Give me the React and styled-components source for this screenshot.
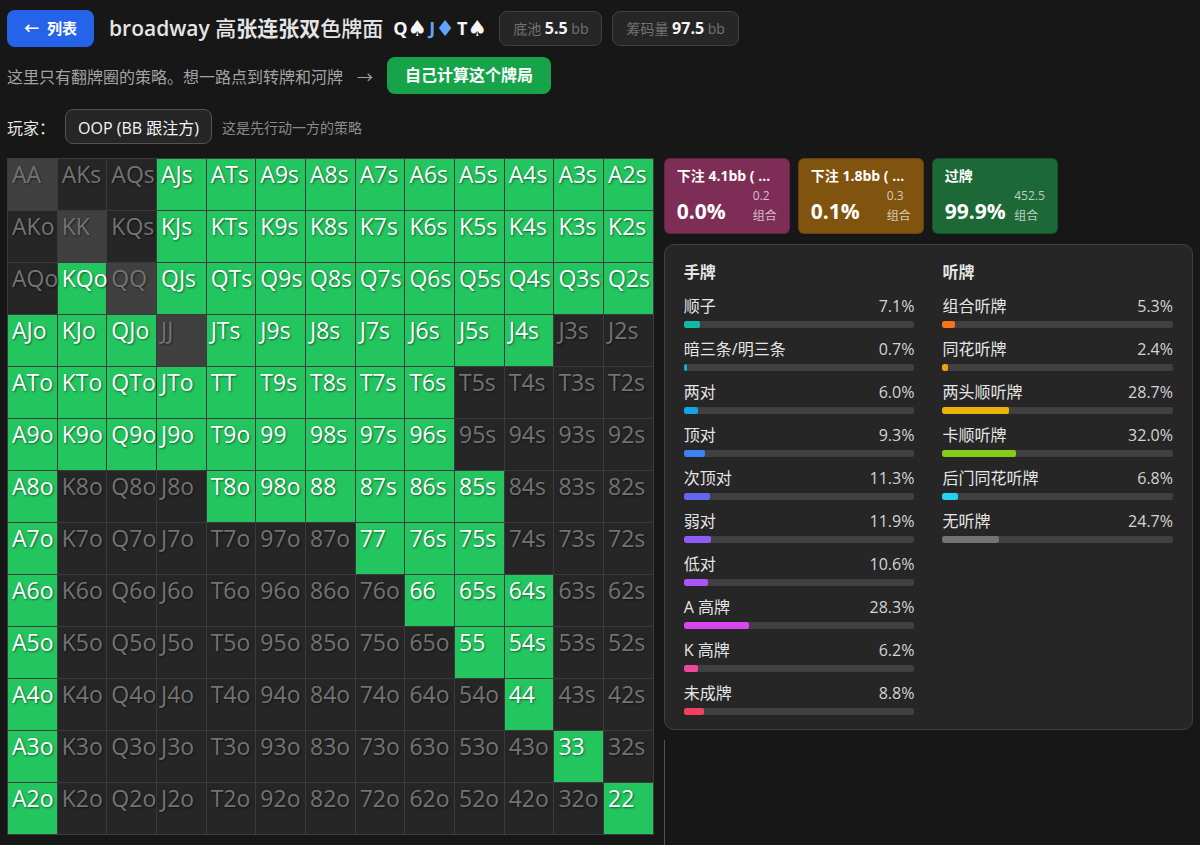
import React from 'react'
import styled, { createGlobalStyle } from 'styled-components'

const RANKS = 'AKQJT98765432'.split('');

// first and last column played in each row of the matrix
const PLAYED = [
  [[3, 12]],
  [[3, 12]],
  [[1, 1], [3, 12]],
  [[0, 2], [4, 10]],
  [[0, 8]],
  [[0, 8]],
  [[0, 0], [4, 9]],
  [[0, 0], [7, 9]],
  [[0, 0], [8, 10]],
  [[0, 0], [9, 10]],
  [[0, 0], [10, 10]],
  [[0, 0], [11, 11]],
  [[0, 0], [12, 12]],
];

const board = [
  { rank: 'Q', suit: '♠' },
  { rank: 'J', suit: '♦' },
  { rank: 'T', suit: '♠' },
];

const actions = [
  { name: '下注 4.1bb ( ...', percent: '0.0%', combos: '0.2', color: '#7d2d56' },
  { name: '下注 1.8bb ( ...', percent: '0.1%', combos: '0.3', color: '#80530f' },
  { name: '过牌', percent: '99.9%', combos: '452.5', color: '#1c6837' },
];

const madeHands = [
  { name: '顺子', value: 7.1, color: '#14b8a6' },
  { name: '暗三条/明三条', value: 0.7, color: '#06b6d4' },
  { name: '两对', value: 6.0, color: '#0ea5e9' },
  { name: '顶对', value: 9.3, color: '#3b82f6' },
  { name: '次顶对', value: 11.3, color: '#6366f1' },
  { name: '弱对', value: 11.9, color: '#8b5cf6' },
  { name: '低对', value: 10.6, color: '#a855f7' },
  { name: 'A 高牌', value: 28.3, color: '#d946ef' },
  { name: 'K 高牌', value: 6.2, color: '#ec4899' },
  { name: '未成牌', value: 8.8, color: '#f43f5e' },
];

const draws = [
  { name: '组合听牌', value: 5.3, color: '#f97316' },
  { name: '同花听牌', value: 2.4, color: '#f59e0b' },
  { name: '两头顺听牌', value: 28.7, color: '#eab308' },
  { name: '卡顺听牌', value: 32.0, color: '#84cc16' },
  { name: '后门同花听牌', value: 6.8, color: '#22d3ee' },
  { name: '无听牌', value: 24.7, color: '#737373' },
];

const handName = (row, col) => {
  if (row === col) return RANKS[row] + RANKS[col];
  return row < col ? `${RANKS[row]}${RANKS[col]}s` : `${RANKS[col]}${RANKS[row]}o`;
};

const isPlayed = (row, col) => PLAYED[row].some(([from, to]) => col >= from && col <= to);

const HandMatrix = () => (
  <Matrix>
    <tbody>
      {RANKS.map((rank, row) => (
        <tr key={rank}>
          {RANKS.map((other, col) => (
            <Cell key={other} $played={isPlayed(row, col)} $pair={row === col}>
              {handName(row, col)}
            </Cell>
          ))}
        </tr>
      ))}
    </tbody>
  </Matrix>
);

const StatColumn = ({ title, items }) => (
  <section>
    <StatTitle>{title}</StatTitle>
    <StatList>
      {items.map(({ name, value, color }) => (
        <li key={name}>
          <StatRow>
            <span>{name}</span>
            <StatValue>{value.toFixed(1)}%</StatValue>
          </StatRow>
          <Track>
            <Fill $color={color} style={{ width: `${value}%` }} />
          </Track>
        </li>
      ))}
    </StatList>
  </section>
);

const App = () => {
  return (
    <Page>
      <GlobalStyle />

      <Header>
        <BackLink href="#list"><span>←</span><span>列表</span></BackLink>
        <Title>broadway <Light>高</Light>张连张双<Light>色牌面</Light></Title>
        <Board>
          {board.map(({ rank, suit }) => (
            <Card key={rank} $blue={suit === '♦'}>{rank}<Suit>{suit}</Suit></Card>
          ))}
        </Board>
        <Chips>
          <Chip>底池 <b>5.5</b> bb</Chip>
          <Chip>筹码量 <b>97.5</b> bb</Chip>
        </Chips>
      </Header>

      <Notice>
        <NoticeText><span>这里只有翻牌圈的策略。想一路点到转牌和河牌</span><span>→</span></NoticeText>
        <SolveLink href="#solve">自己计算这个牌局</SolveLink>
      </Notice>

      <PlayerRow>
        <span id="player">玩家：</span>
        <PlayerButton type="button" aria-describedby="player">OOP (BB 跟注方)</PlayerButton>
        <Hint>这是先行动一方的策略</Hint>
      </PlayerRow>

      <Content>
        <HandMatrix />
        <Side>
          <Actions>
            {actions.map(({ name, percent, combos, color }) => (
              <ActionCard key={name} type="button" $color={color}>
                <ActionName>{name}</ActionName>
                <ActionBody>
                  <Percent>{percent}</Percent>
                  <Combos><span>{combos}</span><span>组合</span></Combos>
                </ActionBody>
              </ActionCard>
            ))}
          </Actions>
          <Stats>
            <StatColumn title="手牌" items={madeHands} />
            <StatColumn title="听牌" items={draws} />
          </Stats>
          <Details />
        </Side>
      </Content>
    </Page>
  )
}

const GlobalStyle = createGlobalStyle`
  *{
    box-sizing: border-box;
    margin: 0;
    padding: 0;
  }

  body{
    background: #171717;
    color: #e5e5e5;
    font-family: "Open Sans", "Noto Sans CJK SC", sans-serif;
    font-size: 16px;
  }

  button{
    font: inherit;
    color: inherit;
    cursor: pointer;
  }

  a{
    text-decoration: none;
  }
`;

const Page = styled.main`
  min-height: 100vh;
  display: flex;
  flex-direction: column;
  padding: 10px 7px 0;
`;

const Header = styled.header`
  display: flex;
  align-items: center;
  height: 37px;
`;

const BackLink = styled.a`
  display: flex;
  gap: 8px;
  padding: 0 17px;
  border-radius: 8px;
  background: #2563eb;
  color: #fff;
  font-size: 15px;
  font-weight: 600;
  line-height: 37px;
`;

const Title = styled.h1`
  margin-left: 15px;
  font-size: 21px;
  font-weight: 600;
  line-height: 37px;
`;

const Light = styled.span`
  font-weight: 500;
`;

const Board = styled.div`
  display: flex;
  gap: 2px;
  margin-left: 10px;
  font-size: 18px;
  font-weight: 700;
  line-height: 37px;
`;

const Card = styled.span`
  display: flex;
  color: ${({ $blue }) => ($blue ? '#60a5fa' : '#f5f5f5')};
`;

const Suit = styled.span`
  font-family: "DejaVu Sans", sans-serif;
  font-size: 22px;
  font-weight: 400;
`;

const Chips = styled.div`
  display: flex;
  gap: 10px;
  margin-left: 12px;
`;

const Chip = styled.span`
  padding: 0 13px;
  border: 1px solid #404040;
  border-radius: 8px;
  background: #262626;
  color: #737373;
  font-size: 14px;
  line-height: 33px;

  b{
    color: #f5f5f5;
    font-size: 16px;
    font-weight: 700;
  }
`;

const Notice = styled.div`
  display: flex;
  align-items: center;
  gap: 14px;
  margin-top: 10px;
`;

const NoticeText = styled.p`
  display: flex;
  gap: 14px;
  color: #a3a3a3;
`;

const SolveLink = styled.a`
  padding: 0 18px;
  border-radius: 8px;
  background: #16a34a;
  color: #fff;
  font-weight: 600;
  line-height: 37px;
`;

const PlayerRow = styled.div`
  display: flex;
  align-items: center;
  gap: 10px;
  margin-top: 15px;
`;

const PlayerButton = styled.button`
  height: 35px;
  padding: 0 12px;
  border: 1px solid #525252;
  border-radius: 8px;
  background: #262626;
  color: #f5f5f5;
`;

const Hint = styled.span`
  color: #8a8a8a;
  font-size: 14px;
`;

const Content = styled.div`
  flex: 1;
  display: grid;
  grid-template-columns: minmax(0, 11fr) minmax(0, 9fr);
  gap: 10px;
  margin-top: 14px;
`;

const Matrix = styled.table`
  width: 100%;
  align-self: start;
  table-layout: fixed;
  border-spacing: 1px;
  background: #3b3b3b;
`;

const Cell = styled.td`
  height: 51px;
  padding-left: 4px;
  background: ${({ $played, $pair }) => ($played ? '#22c55e' : $pair ? '#404040' : '#262626')};
  color: ${({ $played }) => ($played ? '#fff' : '#737373')};
  font-size: 23px;
  line-height: 30px;
  text-shadow: 1px 1px 2px rgba(0, 0, 0, 0.5);
  vertical-align: top;
  white-space: nowrap;
`;

const Side = styled.div`
  display: flex;
  flex-direction: column;
  gap: 10px;
`;

const Actions = styled.div`
  display: flex;
  gap: 8px;
`;

const ActionCard = styled.button`
  width: 126px;
  height: 76px;
  padding: 0 12px;
  border: 1px solid rgba(0, 0, 0, 0.2);
  border-radius: 6px;
  background: ${({ $color }) => $color};
  color: #fff;
  text-align: left;
`;

const ActionName = styled.div`
  font-size: 14px;
  font-weight: 700;
  line-height: 20px;
  white-space: nowrap;
`;

const ActionBody = styled.div`
  display: flex;
  align-items: flex-end;
  justify-content: space-between;
`;

const Percent = styled.span`
  font-size: 21px;
  font-weight: 700;
  line-height: 30px;
`;

const Combos = styled.span`
  display: flex;
  flex-direction: column;
  color: rgba(255, 255, 255, 0.7);
  font-size: 12px;
  line-height: 20px;
`;

const Stats = styled.div`
  display: grid;
  grid-template-columns: 1fr 1fr;
  gap: 28px;
  padding: 15px 19px 14px;
  border: 1px solid #404040;
  border-radius: 10px;
  background: #262626;
`;

const StatTitle = styled.h2`
  font-size: 16px;
  font-weight: 600;
  line-height: 24px;
`;

const StatList = styled.ul`
  display: flex;
  flex-direction: column;
  gap: 10px;
  margin-top: 11px;
  list-style: none;
`;

const StatRow = styled.div`
  display: flex;
  justify-content: space-between;
  line-height: 22px;
`;

const StatValue = styled.span`
  color: #d4d4d4;
`;

const Track = styled.div`
  height: 7px;
  margin-top: 4px;
  border-radius: 2px;
  background: #404040;
  overflow: hidden;
`;

const Fill = styled.div`
  min-width: 3px;
  height: 100%;
  border-radius: 2px;
  background: ${({ $color }) => $color};
`;

const Details = styled.div`
  flex: 1;
  border-left: 1px solid #525252;
`;

export default App
